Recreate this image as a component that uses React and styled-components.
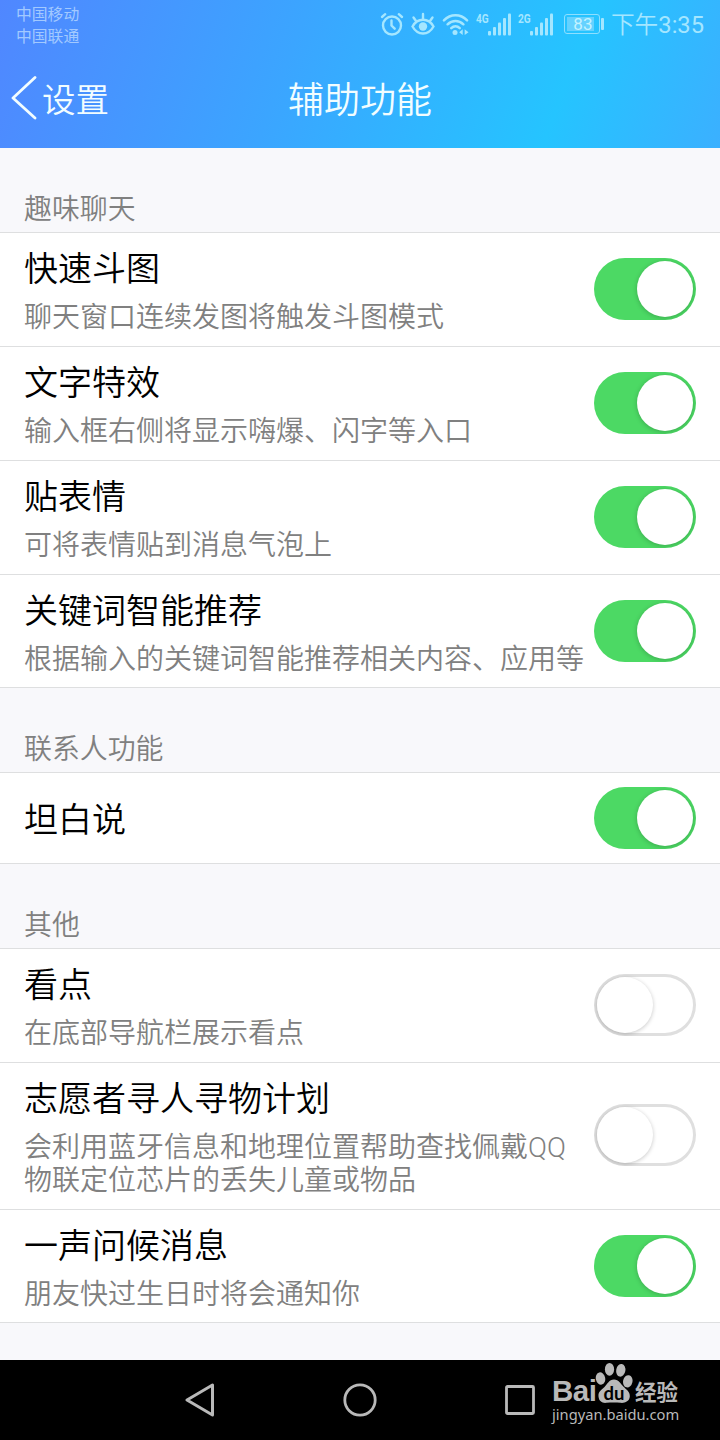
import React from "react";
import styled, { createGlobalStyle } from "styled-components";

const sections = [
  {
    title: "趣味聊天",
    rows: [
      { name: "快速斗图", desc: ["聊天窗口连续发图将触发斗图模式"], on: true },
      { name: "文字特效", desc: ["输入框右侧将显示嗨爆、闪字等入口"], on: true },
      { name: "贴表情", desc: ["可将表情贴到消息气泡上"], on: true },
      {
        name: "关键词智能推荐",
        desc: ["根据输入的关键词智能推荐相关内容、应用等"],
        on: true,
      },
    ],
  },
  {
    title: "联系人功能",
    rows: [{ name: "坦白说", on: true }],
  },
  {
    title: "其他",
    rows: [
      { name: "看点", desc: ["在底部导航栏展示看点"], on: false },
      {
        name: "志愿者寻人寻物计划",
        desc: [
          "会利用蓝牙信息和地理位置帮助查找佩戴QQ",
          "物联定位芯片的丢失儿童或物品",
        ],
        on: false,
      },
      { name: "一声问候消息", desc: ["朋友快过生日时将会通知你"], on: true },
    ],
  },
];

const AlarmIcon = () => (
  <svg width="24" height="26" viewBox="0 0 24 26" fill="none" stroke="currentColor" strokeWidth="2.4" strokeLinecap="round">
    <circle cx="12" cy="14.5" r="9" />
    <path d="M11.5 9.5v5l3.2 3.2M2 6 5.2 3.2M22 6 18.8 3.2" />
  </svg>
);

const EyeIcon = () => (
  <svg width="24" height="26" viewBox="0 0 24 26" fill="none" stroke="currentColor" strokeWidth="2.4" strokeLinecap="round">
    <path d="M1.5 15.5C4 11 8 8.8 12 8.8s8 2.2 10.5 6.7C20 20 16 22.5 12 22.5S4 20 1.5 15.5Z" />
    <circle cx="12" cy="15.5" r="4.2" fill="currentColor" stroke="none" />
    <path d="M12 8V3M5 10 2.5 6.5M19 10l2.5-3.5" />
  </svg>
);

const WifiIcon = () => (
  <svg width="27" height="26" viewBox="0 0 28 26" fill="none" stroke="currentColor" strokeWidth="2.6" strokeLinecap="round">
    <path d="M2 9.3C9 2.3 19 2.3 26 9.3M5.8 13.3c4.8-4.6 11.6-4.6 16.4 0M9.6 17.2c2.6-2.4 6.2-2.4 8.8 0" />
    <circle cx="13.5" cy="21.7" r="2.6" fill="currentColor" stroke="none" />
    <path d="M17.8 21.5 21.5 18.5v6zM27.5 21.5l-4-3v6z" fill="currentColor" stroke="none" />
  </svg>
);

const SignalIcon = () => (
  <svg width="23" height="23" viewBox="0 0 23 23" fill="currentColor">
    <rect x="0" y="18" width="3" height="4.5" rx="1" />
    <rect x="5" y="14" width="3" height="8.5" rx="1" />
    <rect x="10" y="9.5" width="3" height="13" rx="1" />
    <rect x="15" y="5" width="3" height="17.5" rx="1" />
    <rect x="20" y="0.5" width="3" height="22" rx="1" />
  </svg>
);

const PawIcon = () => (
  <svg width="38" height="42" viewBox="0 0 38 42" fill="#b9b9b9">
    <ellipse cx="5.5" cy="16.5" rx="4.7" ry="6.2" transform="rotate(-12 5.5 16.5)" />
    <ellipse cx="14.5" cy="7.3" rx="4.6" ry="6.4" />
    <ellipse cx="25.8" cy="8.3" rx="4.6" ry="6.4" transform="rotate(10 25.8 8.3)" />
    <ellipse cx="32.8" cy="19.3" rx="4.7" ry="6.2" transform="rotate(12 32.8 19.3)" />
    <path d="M19 17.5c-5 0-6.5 4.5-9.5 7.5S3 29.500 3.500 34.500s4 6.800 8 6.300 10-.5 14 0 9-1.300 9.300-6.300-3.500-7-6.500-10-4.300-7-9.300-7Z" />
    <text x="19" y="37.5" textAnchor="middle" fontFamily="Lato, sans-serif" fontSize="18.5" fontWeight="700" fill="#000">
      du
    </text>
  </svg>
);

const App = () => {
  return (
    <Screen>
      <GlobalStyle />
      <Header>
        <StatusBar>
          <Carriers>
            <p>中国移动</p>
            <p>中国联通</p>
          </Carriers>
          <StatusIcons>
            <AlarmIcon />
            <EyeIcon />
            <WifiIcon />
            <Signal>
              <span>4G</span>
              <SignalIcon />
            </Signal>
            <Signal>
              <span>2G</span>
              <SignalIcon />
            </Signal>
            <Battery>
              <BatteryBody>
                <BatteryLevel>83</BatteryLevel>
              </BatteryBody>
              <BatteryTip />
            </Battery>
            <Clock>
              下午<b>3:35</b>
            </Clock>
          </StatusIcons>
        </StatusBar>
        <TitleBar>
          <Back>
            <svg width="26" height="44" viewBox="0 0 26 44" fill="none" stroke="currentColor" strokeWidth="2.8" strokeLinecap="round" strokeLinejoin="round">
              <path d="M24 1.5 2 22l22 20" />
            </svg>
            <span>设置</span>
          </Back>
          <h1>辅助功能</h1>
        </TitleBar>
      </Header>

      <Content>
        {sections.map((section) => (
          <section key={section.title}>
            <SectionTitle>{section.title}</SectionTitle>
            <Group>
              {section.rows.map((row) => (
                <Row key={row.name} $single={!row.desc}>
                  <RowText>
                    <h3>{row.name}</h3>
                    {row.desc?.map((line) => (
                      <p key={line}>{line}</p>
                    ))}
                  </RowText>
                  <Toggle $on={row.on} role="switch" aria-checked={row.on}>
                    <Knob $on={row.on} />
                  </Toggle>
                </Row>
              ))}
            </Group>
          </section>
        ))}
      </Content>

      <NavBar>
        <svg width="30" height="34" viewBox="0 0 30 34" fill="none" stroke="#b9b9b9" strokeWidth="3" strokeLinejoin="round">
          <path d="M27.5 2v30L2 17z" />
        </svg>
        <svg width="34" height="34" viewBox="0 0 34 34" fill="none" stroke="#b9b9b9" strokeWidth="2.8">
          <circle cx="17" cy="17" r="15.2" />
        </svg>
        <svg width="30" height="30" viewBox="0 0 30 30" fill="none" stroke="#b9b9b9" strokeWidth="2.8">
          <rect x="1.5" y="1.5" width="27" height="27" rx="1" />
        </svg>
        <Watermark>
          <Brand>
            <b>Bai</b>
            <PawIcon />
            <strong>经验</strong>
          </Brand>
          <Site>jingyan.baidu.com</Site>
        </Watermark>
      </NavBar>
    </Screen>
  );
};

const GlobalStyle = createGlobalStyle`
  * {
    box-sizing: border-box;
    margin: 0;
    padding: 0;
  }
  body {
    background: #f8f8fb;
    font-family: Roboto, "Noto Sans CJK SC", sans-serif;
    font-weight: 350;
  }
  h1, h3 {
    font-weight: 350;
  }
  svg {
    display: block;
    flex-shrink: 0;
  }
`;

const Screen = styled.div`
  width: 720px;
  height: 1440px;
  display: flex;
  flex-direction: column;
  overflow: hidden;
  background: #f8f8fb;
`;

const Header = styled.header`
  height: 148px;
  flex-shrink: 0;
  color: #f2fdff;
  background: linear-gradient(110deg, #5087ff 0%, #3ba5ff 40%, #25c4ff 77%, #3bb0ff 100%);
`;

const StatusBar = styled.div`
  height: 50px;
  display: flex;
  justify-content: space-between;
  padding: 0 16px;
  color: #a4e6ff;
`;

const Carriers = styled.div`
  padding-top: 4px;
  font-size: 15.8px;
  font-weight: 400;
  line-height: 22px;
  color: #a2c9ff;
`;

const StatusIcons = styled.div`
  height: 48px;
  display: flex;
  align-items: center;
  gap: 7px;
`;

const Signal = styled.div`
  display: flex;
  align-items: flex-start;

  span {
    width: 12px;
    font-size: 13.5px;
    font-weight: 700;
    line-height: 11px;
    transform: scaleX(0.75);
    transform-origin: 0 0;
  }
`;

const Battery = styled.div`
  display: flex;
  align-items: center;
  gap: 1px;
  margin-left: 4px;
`;

const BatteryBody = styled.div`
  width: 36px;
  height: 20px;
  padding: 2px 5px 2px 2px;
  border: 1px solid #8edfff;
  border-radius: 3px;
`;

const BatteryLevel = styled.div`
  height: 14px;
  display: flex;
  align-items: center;
  justify-content: center;
  padding-left: 5px;
  background: #65d2ff;
  color: #c4f2ff;
  font-size: 17px;
  font-weight: 400;
`;

const BatteryTip = styled.i`
  width: 3px;
  height: 12px;
  border-radius: 1px;
  background: #a4e6ff;
`;

const Clock = styled.span`
  padding-top: 2px;
  font-size: 23.7px;
  line-height: 46px;
  white-space: nowrap;

  b {
    font-weight: 400;
  }
`;

const TitleBar = styled.div`
  height: 98px;
  display: grid;
  grid-template-columns: 1fr auto 1fr;
  align-items: center;

  h1 {
    padding-top: 4px;
    font-size: 36px;
    line-height: 94px;
  }
`;

const Back = styled.div`
  display: flex;
  align-items: center;
  gap: 5px;
  padding: 0 0 2px 11px;
  font-size: 33.5px;
  line-height: 90px;

  span {
    padding-top: 5px;
  }
`;

const Content = styled.main`
  flex: 1;
`;

const SectionTitle = styled.h2`
  height: 84px;
  padding: 42px 24px 0;
  font-size: 27.9px;
  font-weight: 350;
  line-height: 40px;
  color: #808080;
`;

const Group = styled.div`
  border-top: 1px solid #dedfe0;
  background: #fff;
`;

const Row = styled.div`
  display: flex;
  align-items: center;
  justify-content: space-between;
  padding: ${(props) => (props.$single ? "14px 24px" : "12px 24px 13px")};
  border-bottom: 1px solid #dedfe0;

  &:last-child {
    padding-bottom: ${(props) => (props.$single ? "13px" : "12px")};
  }

  h3 {
    padding-top: ${(props) => (props.$single ? "3px" : "0")};
  }
`;

const RowText = styled.div`
  flex: 1;
  white-space: nowrap;

  h3 {
    font-size: 34px;
    line-height: 48px;
    color: #000;
  }
  p {
    font-size: 28px;
    line-height: 33px;
    color: #808080;
  }
  p:first-of-type {
    padding-top: 8px;
  }
  p:last-of-type {
    margin-bottom: -1px;
  }
`;

const Toggle = styled.div`
  width: 102px;
  height: 62px;
  flex-shrink: 0;
  display: flex;
  align-items: center;
  justify-content: ${(props) => (props.$on ? "flex-end" : "flex-start")};
  margin-bottom: 1px;
  padding: 3px;
  border-radius: 31px;
  overflow: hidden;
  background: ${(props) => (props.$on ? "#4cd964" : "#fff")};
  box-shadow: ${(props) => (props.$on ? "none" : "inset 0 0 0 3px #dfdfdf")};
`;

const Knob = styled.span`
  width: 56px;
  height: 56px;
  border-radius: 50%;
  background: #fff;
  box-shadow: ${(props) =>
    props.$on ? "0 1px 5px rgba(0, 0, 0, 0.22)" : "0 1px 4px rgba(0, 0, 0, 0.22)"};
`;

const NavBar = styled.nav`
  position: relative;
  height: 80px;
  flex-shrink: 0;
  display: flex;
  align-items: center;
  gap: 128px;
  padding-left: 185px;
  background: #000;
`;

const Watermark = styled.div`
  position: absolute;
  left: 552px;
  top: 2px;
  color: #b9b9b9;
`;

const Brand = styled.div`
  height: 42px;
  display: flex;
  align-items: flex-end;

  b {
    width: 43px;
    font: 700 29.5px/26px "Liberation Sans", sans-serif;
    letter-spacing: -0.5px;
  }
  strong {
    margin: 0 0 2px 2px;
    font: 700 21.5px/22px "Noto Sans CJK SC", sans-serif;
  }
`;

const Site = styled.p`
  font: 400 14.7px/20px "Noto Sans", sans-serif;
  white-space: nowrap;
`;

export default App;
